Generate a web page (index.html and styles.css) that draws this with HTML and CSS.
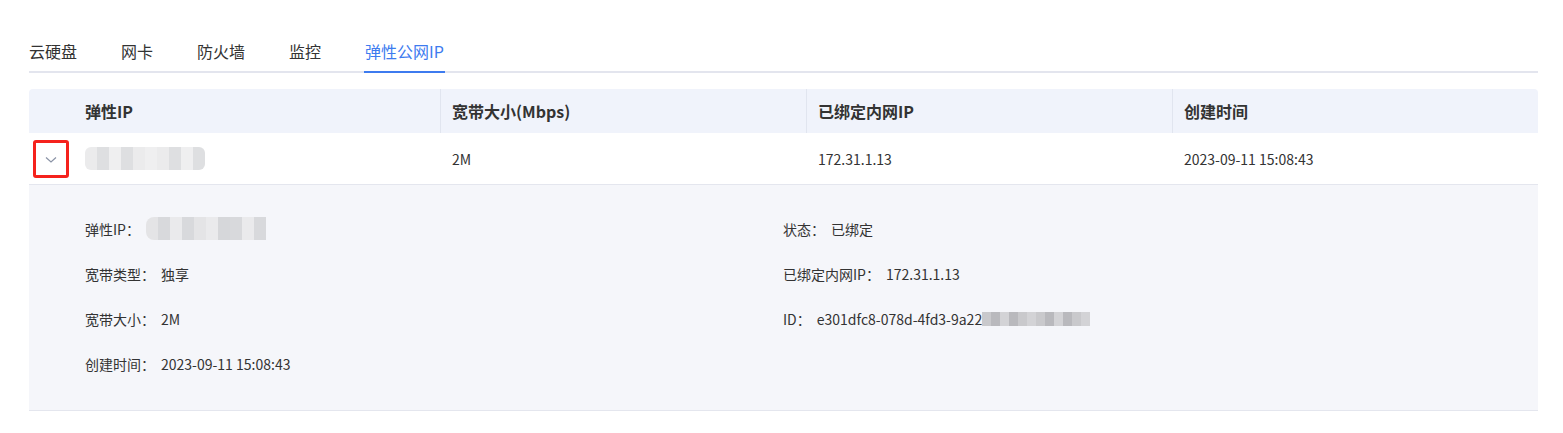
FILE: index.html
```html
<!DOCTYPE html>
<html lang="zh">
<head>
    <meta charset="UTF-8">
    <title>弹性公网IP</title>
    <link rel="stylesheet" href="styles.css">
</head>
<body>

    <!-- 标签栏 -->
    <div class="tabs">
        <div class="tab">云硬盘</div>
        <div class="tab">网卡</div>
        <div class="tab">防火墙</div>
        <div class="tab">监控</div>
        <div class="tab active">弹性公网IP</div>
    </div>

    <!-- 表格 -->
    <div class="table">
        <div class="row head">
            <div class="cell expand"></div>
            <div class="cell c1">弹性IP</div>
            <div class="cell c2">宽带大小(Mbps)</div>
            <div class="cell c3">已绑定内网IP</div>
            <div class="cell c4">创建时间</div>
        </div>
        <div class="row body">
            <div class="cell expand">
                <div class="expand-btn">
                    <svg width="12" height="8" viewBox="0 0 12 8"><path d="M1 1.5 L6 6 L11 1.5" fill="none" stroke="#8a93a6" stroke-width="1.2"/></svg>
                </div>
            </div>
            <div class="cell c1"><div class="mosaic wide"><i></i><i></i><i></i><i></i><i></i><i></i><i></i><i></i><i></i><i></i></div></div>
            <div class="cell c2">2M</div>
            <div class="cell c3">172.31.1.13</div>
            <div class="cell c4">2023-09-11 15:08:43</div>
        </div>
        <div class="detail">
            <div class="detail-col">
                <div class="item"><span class="label">弹性IP：</span><div class="mosaic"><i></i><i></i><i></i><i></i><i></i><i></i><i></i><i></i><i></i><i></i></div></div>
                <div class="item"><span class="label">宽带类型：</span><span>独享</span></div>
                <div class="item"><span class="label">宽带大小：</span><span>2M</span></div>
                <div class="item"><span class="label">创建时间：</span><span>2023-09-11 15:08:43</span></div>
            </div>
            <div class="detail-col">
                <div class="item"><span class="label">状态：</span><span>已绑定</span></div>
                <div class="item"><span class="label">已绑定内网IP：</span><span>172.31.1.13</span></div>
                <div class="item"><span class="label">ID：</span><span>e301dfc8-078d-4fd3-9a22</span><div class="mosaic dark"><i></i><i></i><i></i><i></i><i></i><i></i><i></i><i></i><i></i><i></i><i></i><i></i></div></div>
            </div>
        </div>
    </div>

</body>
</html>
```

FILE: styles.css
```css
body {
    margin: 0;
    padding: 38px 25px 0 29px;
    font-family: "Noto Sans CJK SC", "Noto Sans", sans-serif;
    color: #333;
    background: #fff;
}
.tabs {
    display: flex;
    border-bottom: 2px solid #e3e5ee;
    height: 33px;
}
.tab {
    font-size: 16px;
    line-height: 26px;
    margin-right: 44px;
    position: relative;
}
.tab.active {
    color: #3d7bef;
}
.tab.active::after {
    content: "";
    position: absolute;
    left: -1px;
    right: -1px;
    bottom: -2px;
    height: 2px;
    background: #3d7bef;
}
.table {
    margin-top: 16px;
}
.row {
    display: flex;
    align-items: center;
}
.head {
    height: 44px;
    background: #f0f3fb;
    border-radius: 4px 4px 0 0;
    font-weight: bold;
    font-size: 16px;
}
.body {
    height: 51px;
    font-size: 14px;
    border-bottom: 1px solid #e4e6ee;
}
.cell {
    height: 100%;
    display: flex;
    align-items: center;
    box-sizing: border-box;
    padding-left: 11px;
}
.expand {
    width: 45px;
    padding-left: 4px;
}
.c1 { width: 366px; padding-left: 11px; }
.c2 { width: 366px; }
.c3 { width: 366px; }
.c4 { flex: 1; }
.head .c2, .head .c3, .head .c4 {
    border-left: 1px solid #e1e5ef;
}
.body .c2, .body .c3, .body .c4 {
    border-left: 1px solid transparent;
}
.expand-btn {
    width: 30px;
    height: 30px;
    border: 3px solid #f5221d;
    border-radius: 3px;
    display: flex;
    align-items: center;
    justify-content: center;
    padding-top: 2px;
    box-sizing: content-box;
}
.mosaic {
    display: flex;
    height: 23px;
    border-radius: 6px;
    overflow: hidden;
}
.mosaic i {
    width: 12px;
    height: 100%;
    background: #e4e4e6;
}
.mosaic i:nth-child(2n) { background: #d8d9dc; }
.mosaic i:nth-child(3n) { background: #eaeaec; }
.mosaic i:nth-child(7) { background: #d6d7da; }
.mosaic.wide i { background: #ebebec; }
.mosaic.wide i:nth-child(2n) { background: #dedfe1; }
.mosaic.wide i:nth-child(3n) { background: #efeff0; }
.detail {
    display: flex;
    background: #f5f6fa;
    border-bottom: 1px solid #e4e6ee;
    padding: 21px 0 24px 56px;
    font-size: 14px;
}
.detail-col {
    width: 698px;
}
.item {
    display: flex;
    align-items: center;
    height: 45px;
}
.label {
    margin-right: 6px;
}
.item .mosaic {
    height: 23px;
    border-radius: 8px 0 0 8px;
}
.item .mosaic.dark {
    height: 14px;
    border-radius: 0;
}
.mosaic.dark i { width: 9px; background: #c9c9cc; }
.mosaic.dark i:nth-child(2n) { background: #b9b9bd; }
.mosaic.dark i:nth-child(3n) { background: #d3d3d6; }
```
